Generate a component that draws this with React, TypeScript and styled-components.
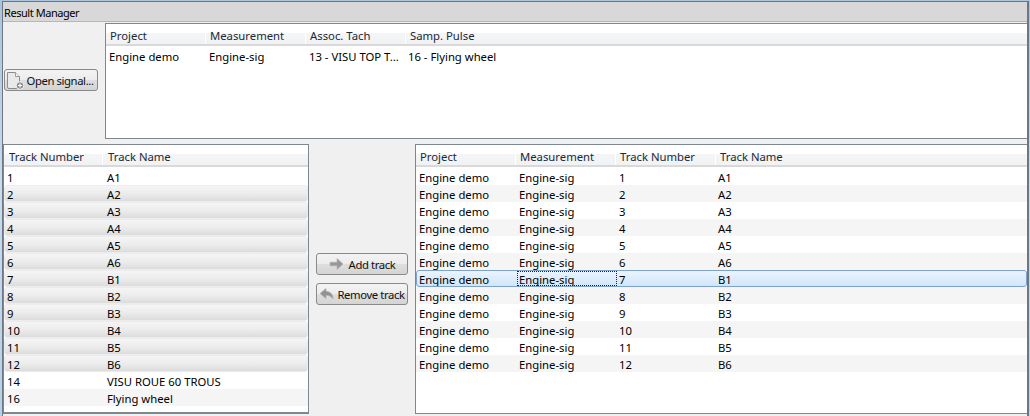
import React from "react";
import styled, { createGlobalStyle } from "styled-components";

const Global = createGlobalStyle`
  html, body { margin: 0; padding: 0; background: #f0f0f0; overflow: hidden; }
  #root { width: 1030px; height: 416px; }
  * { box-sizing: border-box; }
`;

const Frame = styled.div`
  width: 1030px;
  height: 416px;
  padding: 1px 1px 0 2px;
  background: linear-gradient(180deg, #a9c4dc 0%, #c9dcec 45%, #b6d0e6 100%);
  overflow: hidden;
`;

const Win = styled.div`
  height: 415px;
  display: flex;
  flex-direction: column;
  background: #f0f0f0;
  border: 1px solid #6d7682;
  border-right-width: 2px;
  border-bottom: 0;
  font-family: "Noto Sans", "Liberation Sans", sans-serif;
  font-size: 11.3px;
  color: #000;
`;

const TitleBar = styled.div`
  height: 20px;
  flex: none;
  padding: 2px 0 0 1px;
  line-height: 17px;
  font-size: 11px;
  letter-spacing: -0.45px;
  background: #d8d8d8;
  border-bottom: 1px solid #b4b8ae;
`;

const TopSection = styled.div`
  height: 116px;
  margin-top: 1px;
  flex: none;
  display: flex;
`;

const SideColumn = styled.div`
  width: 102px;
  flex: none;
  padding: 46px 0 0 1px;
`;

const Panel = styled.div<{ $width?: number }>`
  ${(p) => (p.$width ? `width: ${p.$width}px; flex: none;` : "flex: 1; min-width: 0;")}
  background: #fff;
  border: 1px solid #7f8790;
  border-bottom-width: 2px;
  overflow: hidden;
`;

const TopPanel = styled(Panel)`
  border-right: 0;
  border-bottom-width: 1px;
`;

const Header = styled.div<{ $cols: string }>`
  height: 22px;
  margin-bottom: 1px;
  display: grid;
  grid-template-columns: ${(p) => p.$cols};
  background: linear-gradient(180deg, #fff 0 9px, #f4f5f7 9px, #f1f2f4 100%);
  border-bottom: 2px solid #d9d9d9;
`;

const HeaderCell = styled.div<{ $pad: number; $last?: boolean }>`
  padding-left: ${(p) => p.$pad}px;
  line-height: 24px;
  color: #1a2a38;
  border-right: ${(p) => (p.$last ? "0" : "1px solid #fff")};
  white-space: nowrap;
  overflow: hidden;
`;

type Tone = "plain" | "alt" | "grey" | "active";

const toneStyle: Record<Tone, string> = {
  plain: "background: #fff; line-height: 19px;",
  alt: "background: #f5f5f5; line-height: 19px;",
  grey: `
    background: linear-gradient(180deg, #f5f5f5 0%, #ebebeb 55%, #dcdcdc 100%);
    border: 1px solid #ececec;
    border-radius: 3px;
    line-height: 17px;
  `,
  active: `
    background: linear-gradient(180deg, #eaf4fe 0%, #d1e6fb 100%);
    border: 1px solid #7da2ce;
    border-radius: 3px;
    line-height: 17px;
  `,
};

const Row = styled.div<{ $tone: Tone; $cols: string }>`
  height: 17px;
  display: grid;
  grid-template-columns: ${(p) => p.$cols};
  grid-template-rows: 100%;
  ${(p) => toneStyle[p.$tone]}
`;

const Cell = styled.div<{ $focus?: boolean; $boxed?: boolean }>`
  padding-left: ${(p) => (p.$boxed ? "2px" : "3px")};
  white-space: nowrap;
  overflow: hidden;
  text-overflow: ellipsis;
  ${(p) => (p.$focus ? "outline: 1px dotted #222; outline-offset: -1px;" : "")}
`;

const BottomSection = styled.div`
  height: 270px;
  margin-top: 5px;
  display: flex;
`;

const MiddleColumn = styled.div`
  width: 106px;
  flex: none;
  padding: 109px 0 0 7px;
  display: flex;
  flex-direction: column;
  gap: 8px;
`;

const ToolButton = styled.button<{ $width: number; $iconGap: number }>`
  width: ${(p) => p.$width}px;
  height: 22px;
  padding: 0;
  display: flex;
  align-items: center;
  justify-content: center;
  gap: ${(p) => p.$iconGap}px;
  border: 1px solid #8a8a8a;
  border-radius: 3px;
  background: linear-gradient(180deg, #f3f3f3 0%, #ececec 50%, #dedede 52%, #d4d4d4 100%);
  font: inherit;
  color: #111;
  white-space: nowrap;
  letter-spacing: -0.4px;
`;

const OpenButton = styled(ToolButton)`
  padding-right: 2px;
`;

const IconSvg = styled.svg`
  flex: none;
`;

const FileIcon = () => (
  <IconSvg width="19" height="19" viewBox="0 0 19 19" fill="none">
    <path d="M1.5 1.5h8l4 4v10.5a1.5 1.5 0 0 1-1.5 1.5H3a1.5 1.5 0 0 1-1.5-1.5z" fill="#e9e9e9" stroke="#8c8c8c" />
    <path d="M9.5 1.5v4h4" fill="#f8f8f8" stroke="#9a9a9a" />
    <circle cx="14" cy="14.5" r="3.8" fill="#8a8f93" stroke="#f4f4f4" />
    <path d="M12 14.5h4M14 12.5v4" stroke="#fff" strokeWidth="1.2" />
  </IconSvg>
);

const ArrowIcon = () => (
  <IconSvg width="15" height="14" viewBox="0 0 15 14">
    <path d="M1 5.2h7V1.5L14 7l-6 5.5V8.8H1z" fill="#979797" stroke="#b5b5b5" strokeWidth="0.7" />
  </IconSvg>
);

const BackIcon = () => (
  <IconSvg width="15" height="14" viewBox="0 0 15 14">
    <path d="M7 1.5 1 6.5l6 5V8.3c3 0 4.8.9 7 3.7 0-4.6-2.4-7.3-7-7.7z" fill="#929292" stroke="#b0b0b0" strokeWidth="0.7" />
  </IconSvg>
);

const tracks: [string, string][] = [
  ["1", "A1"], ["2", "A2"], ["3", "A3"], ["4", "A4"], ["5", "A5"], ["6", "A6"],
  ["7", "B1"], ["8", "B2"], ["9", "B3"], ["10", "B4"], ["11", "B5"], ["12", "B6"],
];

const leftRows: [string, string][] = [...tracks, ["14", "VISU ROUE 60 TROUS"], ["16", "Flying wheel"]];

const leftTone = (i: number): Tone => {
  if (i === 0 || i === 12) return "plain";
  if (i === 13) return "alt";
  return "grey";
};

const rightTone = (i: number): Tone => (i === 6 ? "active" : i % 2 ? "alt" : "plain");

const wideCols = "100px 100px 99px 100px 1fr";
const leftCols = "100px 1fr";
const leftHeaderCols = "99px 1fr";

export default function App() {
  return (
    <>
      <Global />
      <Frame>
        <Win>
          <TitleBar>Result Manager</TitleBar>
          <TopSection>
            <SideColumn>
              <OpenButton $width={94} $iconGap={1}>
                <FileIcon />
                Open signal...
              </OpenButton>
            </SideColumn>
            <TopPanel>
              <Header $cols="100px 100px 100px 100px 1fr">
                {["Project", "Measurement", "Assoc. Tach", "Samp. Pulse", ""].map((h, i) => (
                  <HeaderCell key={i} $pad={4} $last={i === 4 || i === 3}>{h}</HeaderCell>
                ))}
              </Header>
              <Row $tone="plain" $cols={wideCols}>
                <Cell>Engine demo</Cell>
                <Cell>Engine-sig</Cell>
                <Cell>13 - VISU TOP T...</Cell>
                <Cell>16 - Flying wheel</Cell>
                <Cell />
              </Row>
            </TopPanel>
          </TopSection>
          <BottomSection>
            <Panel $width={306}>
              <Header $cols={leftHeaderCols}>
                <HeaderCell $pad={5}>Track Number</HeaderCell>
                <HeaderCell $pad={5} $last>Track Name</HeaderCell>
              </Header>
              {leftRows.map(([n, name], i) => {
                const tone = leftTone(i);
                return (
                  <Row key={n} $tone={tone} $cols={leftCols}>
                    <Cell $boxed={tone === "grey"}>{n}</Cell>
                    <Cell $boxed={tone === "grey"}>{name}</Cell>
                  </Row>
                );
              })}
            </Panel>
            <MiddleColumn>
              <ToolButton $width={92} $iconGap={5}>
                <ArrowIcon />
                Add track
              </ToolButton>
              <ToolButton $width={92} $iconGap={3}>
                <BackIcon />
                Remove track
              </ToolButton>
            </MiddleColumn>
            <TopPanel>
              <Header $cols="100px 100px 100px 100px 1fr">
                {["Project", "Measurement", "Track Number", "Track Name", ""].map((h, i) => (
                  <HeaderCell key={i} $pad={4} $last={i === 4 || i === 3}>{h}</HeaderCell>
                ))}
              </Header>
              {tracks.map(([n, name], i) => {
                const tone = rightTone(i);
                const boxed = tone === "active";
                return (
                  <Row key={n} $tone={tone} $cols={wideCols}>
                    <Cell $boxed={boxed}>Engine demo</Cell>
                    <Cell $boxed={boxed} $focus={boxed}>Engine-sig</Cell>
                    <Cell $boxed={boxed}>{n}</Cell>
                    <Cell $boxed={boxed}>{name}</Cell>
                    <Cell />
                  </Row>
                );
              })}
            </TopPanel>
          </BottomSection>
        </Win>
      </Frame>
    </>
  );
}
